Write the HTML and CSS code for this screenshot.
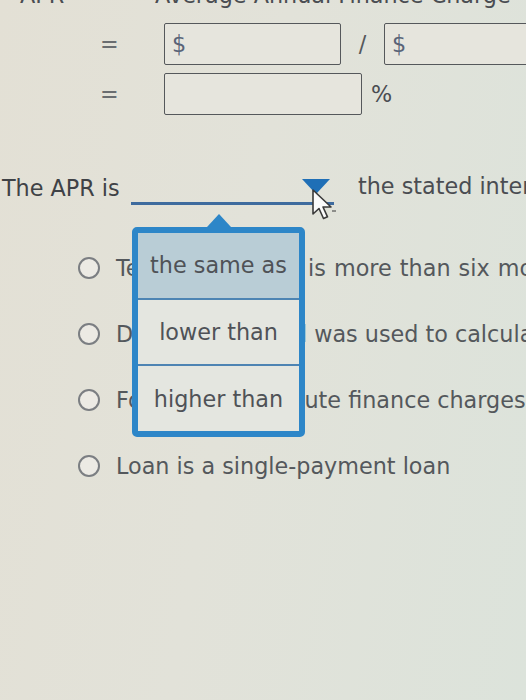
FILE: index.html
```html
<!DOCTYPE html>
<html>
<head>
<meta charset="utf-8">
<link rel="stylesheet" href="styles.css">
</head>
<body>
<div class="page">
  <div class="formula">
    <div class="frow head">
      <span class="lbl">APR</span>
      <span class="eq">=</span>
      <span class="expr">Average Annual Finance Charge</span>
    </div>
    <div class="frow">
      <span class="lbl"></span>
      <span class="eq">=</span>
      <span class="box box-a">$</span>
      <span class="slash">/</span>
      <span class="box box-b">$</span>
    </div>
    <div class="frow">
      <span class="lbl"></span>
      <span class="eq">=</span>
      <span class="box box-c"></span>
      <span class="pct">%</span>
    </div>
  </div>

  <div class="sentence">
    <span class="lead">The APR is</span>
    <span class="select">
      <svg class="arrow" width="28" height="15" viewBox="0 0 28 15"><path d="M0 0 H28 L15 14 Q14 15 13 14 Z" fill="#1f6fb6"/></svg>
      <span class="menu">
        <span class="item active">the same as</span>
        <span class="item">lower than</span>
        <span class="item">higher than</span>
      </span>
      <svg class="cursor" width="26" height="34" viewBox="0 0 26 34"><path d="M2 2 L2 26 L8 20.5 L12.5 30.5 L16.5 28.8 L12 19 L20 19 Z" fill="#fbfbfb" stroke="#3a3a3a" stroke-width="1.6" stroke-linejoin="round"/><path d="M21 23 H25" stroke="#555" stroke-width="1.2"/></svg>
    </span>
    <span class="tail">the stated interest rate because</span>
  </div>

  <ul class="options">
    <li class="opt"><span class="radio"></span><span class="otext wide">Term of the loan is more than six months</span></li>
    <li class="opt"><span class="radio"></span><span class="otext">Discount method was used to calculate finance charges</span></li>
    <li class="opt"><span class="radio"></span><span class="otext">Formula to compute finance charges</span></li>
    <li class="opt"><span class="radio"></span><span class="otext">Loan is a single-payment loan</span></li>
  </ul>
</div>
</body>
</html>
```

FILE: styles.css
```css
html, body {
  margin: 0;
  padding: 0;
}
body {
  width: 526px;
  height: 700px;
  overflow: hidden;
  background: linear-gradient(100deg, #e3e0d5 0%, #e2e2d9 45%, #dce3db 100%);
  font-family: "DejaVu Sans", Verdana, sans-serif;
  font-size: 22.3px;
  color: #4d5156;
}
.page {
  position: relative;
  width: 526px;
  height: 700px;
  overflow: hidden;
}
.formula {
  display: flex;
  flex-direction: column;
  margin-top: -16px;
}
.frow {
  display: flex;
  align-items: center;
  white-space: nowrap;
}
.frow > * {
  flex-shrink: 0;
}
.frow.head {
  height: 23px;
  line-height: 23px;
  margin-bottom: 16px;
  color: #4a4d52;
}
.frow + .frow + .frow {
  margin-top: 8px;
}
.lbl {
  width: 100px;
  padding-left: 20px;
  box-sizing: border-box;
}
.eq {
  width: 55px;
  color: #6a6d70;
}
.box {
  box-sizing: border-box;
  height: 42px;
  margin-left: 9px;
  border: 1.5px solid #55585b;
  border-radius: 2px;
  background: #e6e5dd;
  display: flex;
  align-items: center;
  padding-left: 7px;
  color: #5a6478;
}
.box-a { width: 177px; }
.box-b { width: 160px; margin-left: 0; }
.box-c { width: 198px; }
.slash {
  width: 43px;
  text-align: center;
  color: #55585b;
}
.pct {
  margin-left: 9px;
  color: #4a4d52;
}

.sentence {
  display: flex;
  align-items: flex-start;
  height: 33px;
  margin-top: 57px;
  white-space: nowrap;
}
.sentence > * {
  flex-shrink: 0;
}
.lead {
  line-height: 33px;
  padding-left: 2px;
  width: 131px;
  box-sizing: border-box;
  color: #3f4246;
}
.select {
  position: relative;
  box-sizing: border-box;
  width: 203px;
  height: 33px;
  border-bottom: 3px solid #3e6b9e;
  display: flex;
  justify-content: flex-end;
  align-items: flex-start;
}
.arrow {
  margin-top: 7px;
  margin-right: 4px;
}
.tail {
  margin-left: 24px;
  line-height: 28px;
  color: #4a4d52;
}
.menu {
  position: absolute;
  z-index: 2;
  top: 55px;
  left: 1px;
  width: 173px;
  height: 210px;
  box-sizing: border-box;
  border: 6px solid #2d86c8;
  border-radius: 5px;
  background: #e4e6e0;
  display: flex;
  flex-direction: column;
}
.menu::before {
  content: "";
  position: absolute;
  top: -19px;
  left: 69px;
  border-left: 12px solid transparent;
  border-right: 12px solid transparent;
  border-bottom: 13px solid #2d86c8;
}
.item {
  flex: 1;
  display: flex;
  align-items: center;
  justify-content: center;
  color: #4f5257;
}
.item + .item {
  border-top: 2px solid #4d84b3;
}
.item.active {
  background: #b9cdd6;
}
.cursor {
  position: absolute;
  z-index: 3;
  left: 180px;
  top: 16px;
}

.options {
  list-style: none;
  margin: 30px 0 0 0;
  padding: 0;
}
.opt {
  display: flex;
  align-items: center;
  height: 66px;
  white-space: nowrap;
}
.radio {
  box-sizing: border-box;
  width: 22px;
  height: 22px;
  margin-left: 78px;
  margin-right: 16px;
  border: 2px solid #7b7e82;
  border-radius: 50%;
  background: #eceae4;
  flex-shrink: 0;
}
.otext {
  color: #54585c;
}
.otext.wide {
  word-spacing: 1px;
}
```
